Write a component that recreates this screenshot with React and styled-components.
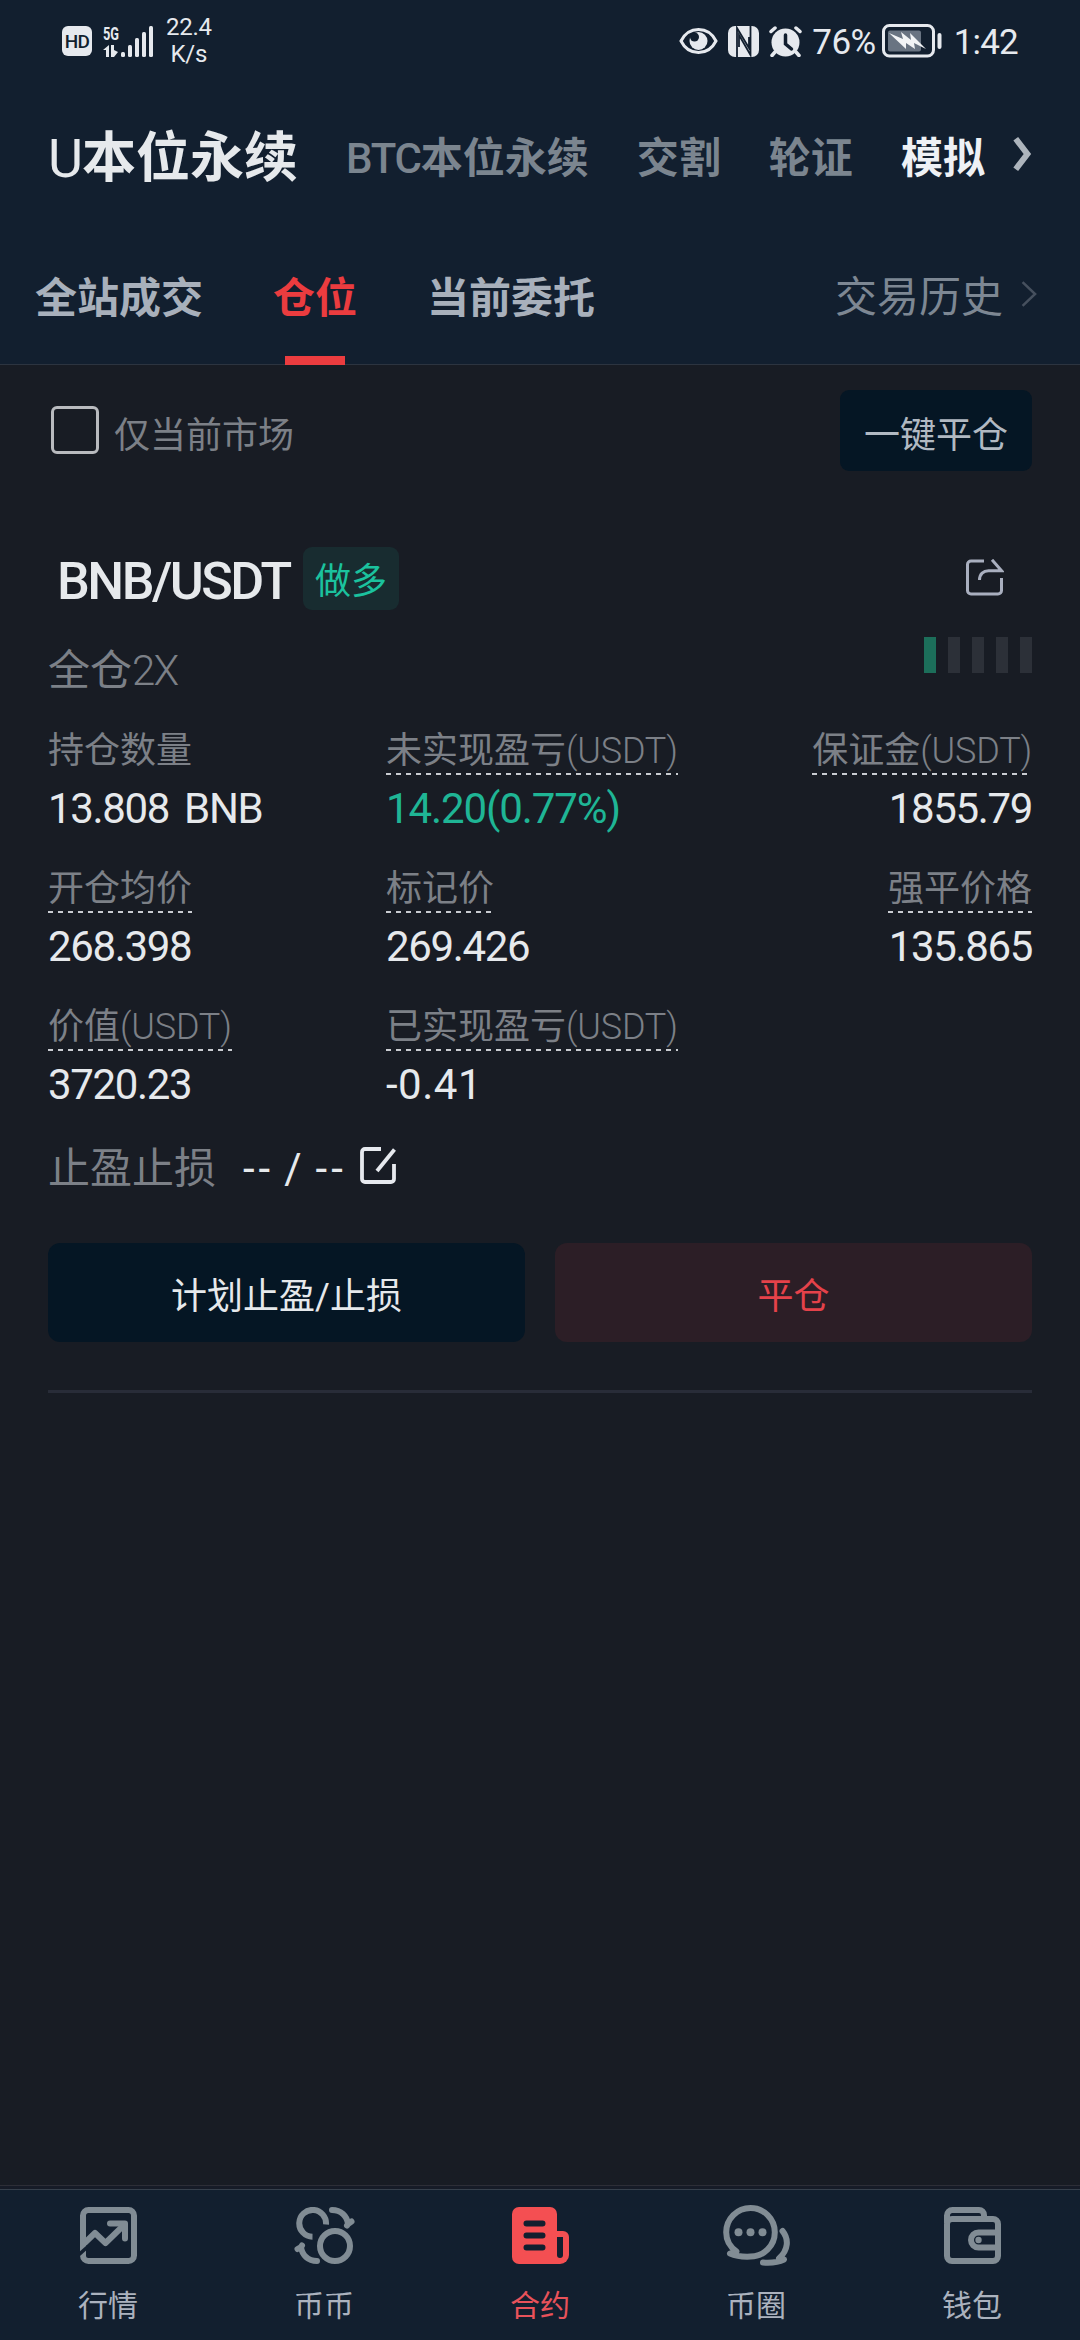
import React from "react";
import styled, { createGlobalStyle } from "styled-components";

const marketTabs = [
  { latin: "U", label: "本位永续", big: true },
  { latin: "BTC", label: "本位永续" },
  { label: "交割" },
  { label: "轮证" },
  { label: "模拟", highlight: true },
];

const subTabs = [{ label: "全站成交" }, { label: "仓位", active: true }, { label: "当前委托" }];

const stats = [
  { label: "持仓数量", value: "13.808 BNB", plain: true },
  { label: "未实现盈亏", unit: "(USDT)", value: "14.20(0.77%)", up: true },
  { label: "保证金", unit: "(USDT)", value: "1855.79", end: true },
  { label: "开仓均价", value: "268.398" },
  { label: "标记价", value: "269.426" },
  { label: "强平价格", value: "135.865", end: true },
  { label: "价值", unit: "(USDT)", value: "3720.23" },
  { label: "已实现盈亏", unit: "(USDT)", value: "-0.41", loose: true },
];

const SignalIcon = () => (
  <svg width="50" height="34" viewBox="0 0 50 34" fill="#e6e9ee" overflow="visible">
    <text x="0" y="16" fontSize="19" fontWeight="700" fontFamily="Roboto, sans-serif" textLength="16" lengthAdjust="spacingAndGlyphs">
      5G
    </text>
    <path d="M0 26l6-5v12H3v-7zM8 21h3v5l4 2-4 5H8z" />
    <rect x="18" y="28" width="4" height="5" rx="1.5" />
    <rect x="25" y="21" width="4" height="12" rx="1.5" />
    <rect x="32" y="14" width="4" height="19" rx="1.5" />
    <rect x="39" y="8" width="4" height="25" rx="1.5" />
    <rect x="46" y="2" width="4" height="31" rx="1.5" />
  </svg>
);

const EyeIcon = () => (
  <svg width="39" height="30" viewBox="0 0 39 30" fill="none">
    <path d="M2 15C6 7 12 3.5 19.5 3.5S33 7 37 15c-4 8-10 11.5-17.500 11.500S6 23 2 15z" stroke="#e6e9ee" strokeWidth="3" />
    <circle cx="19.500" cy="15" r="9" fill="#e6e9ee" />
    <circle cx="15.500" cy="11" r="4.500" fill="#121f2f" />
  </svg>
);

const NfcIcon = () => (
  <svg width="31" height="31" viewBox="0 0 31 31" fill="none">
    <rect width="31" height="31" rx="7" fill="#e6e9ee" />
    <path d="M9 31V2L21 22V11M22.500 0v29L11 9v12" stroke="#121f2f" strokeWidth="1.800" />
  </svg>
);

const AlarmIcon = () => (
  <svg width="33" height="31" viewBox="0 0 33 31" fill="none" stroke="#e6e9ee" strokeLinecap="round">
    <circle cx="16.500" cy="16.500" r="14" fill="#e6e9ee" stroke="none" />
    <path d="M2 5.500L6 2M31 5.500L27 2M6 26l-3 3.500M27 26l3 3.500" strokeWidth="3.500" />
    <path d="M16.500 9v9l6 5" stroke="#121f2f" strokeWidth="3.500" />
  </svg>
);

const BatteryIcon = () => (
  <svg width="60" height="34" viewBox="0 0 60 34" fill="none">
    <rect x="1.500" y="1.500" width="50" height="30.500" rx="6" stroke="#e6e9ee" strokeWidth="3" />
    <rect x="6" y="6.500" width="33" height="21" rx="2" fill="#697482" />
    <path d="M7 9l14 6-2-7 10 8-1-7 16 16-12-6 1 6-9-6 0 6z" fill="#f2f4f6" />
    <rect x="55.500" y="9" width="4" height="16" rx="2" fill="#e6e9ee" />
  </svg>
);

const Chevron = ({ width, height, color, stroke }) => (
  <svg width={width} height={height} viewBox={`0 0 ${width} ${height}`} fill="none">
    <path d={`M${stroke / 1.6} ${stroke / 2.2}L${width - stroke / 1.3} ${height / 2}L${stroke / 1.6} ${height - stroke / 2.2}`} stroke={color} strokeWidth={stroke} />
  </svg>
);

const ShareIcon = () => (
  <svg width="38" height="37" viewBox="0 0 38 37" fill="none" stroke="#a9afbf" strokeWidth="3">
    <path d="M18 2H5a3.500 3.500 0 0 0-3.500 3.500v26A3.500 3.500 0 0 0 5 35h27a3.500 3.500 0 0 0 3.500-3.500V19" />
    <path d="M13.500 21c0-6 4-9.300 9-9.300H35.500L26 .8" />
  </svg>
);

const EditIcon = () => (
  <svg width="37" height="37" viewBox="0 0 37 37" fill="none" stroke="#e6e9ee" strokeWidth="3.800">
    <path d="M21 2H5a3 3 0 0 0-3 3v27a3 3 0 0 0 3 3h26a3 3 0 0 0 3-3V17" />
    <path d="M17 24L34.500 2.500" />
  </svg>
);

const MarketIcon = () => (
  <svg width="57" height="57" viewBox="0 0 57 57" fill="none" stroke="#818c94" strokeWidth="6">
    <rect x="3" y="3" width="51" height="51" rx="5.500" />
    <path d="M2 38.500L15 26l10.500 10L44 18" strokeLinejoin="round" />
    <path d="M30 16.500h15v15" strokeLinecap="round" strokeLinejoin="round" />
    <path d="M-2 48.500L8 39.500" stroke="#121f2f" strokeWidth="3.500" />
  </svg>
);

const CoinsIcon = () => (
  <svg width="61" height="57" viewBox="0 0 61 57" fill="none" stroke="#818c94" strokeWidth="6">
    <path d="M32 17.500A13.400 13.400 0 1 0 18.500 29.700" />
    <circle cx="41" cy="39" r="15" />
    <path d="M38 3C47 3 53 9 54 17l3.500-2.500M54 17l-1 1.500" strokeLinecap="round" strokeLinejoin="round" />
    <path d="M23 54C14 54 8 48 7 40l-3.500 2M7 40l1-1.500" strokeLinecap="round" strokeLinejoin="round" />
  </svg>
);

const ContractIcon = () => (
  <svg width="57" height="57" viewBox="0 0 57 57" fill="none">
    <rect width="45" height="57" rx="7" fill="#f44f52" />
    <path d="M38 24h13a6 6 0 0 1 6 6v18a9 9 0 0 1-9 9H38z" fill="#f44f52" />
    <path d="M45 30h6v18a3 3 0 0 1-6 0z" fill="#121f2f" />
    <path d="M14.500 16.500h16M14.500 28.500h16M14.500 40.500h16" stroke="#121f2f" strokeWidth="6" strokeLinecap="round" />
  </svg>
);

const ChatIcon = () => (
  <svg width="67" height="61" viewBox="0 0 67 61" fill="none" stroke="#818c94" strokeWidth="6" strokeLinecap="round" strokeLinejoin="round">
    <path d="M13.500 46.500C7 42 3.200 35 3.200 27.300a24.300 24.300 0 1 1 24.300 24.300C19 52 12.500 51 7 48.500z" />
    <path d="M59.500 26C66 34 65.500 45 56 53.500l5 1C54 58 47 58 40 57.500" />
    <g fill="#818c94" stroke="none">
      <circle cx="15.500" cy="27.300" r="4" />
      <circle cx="27.500" cy="27.300" r="4" />
      <circle cx="39.500" cy="27.300" r="4" />
    </g>
  </svg>
);

const WalletIcon = () => (
  <svg width="57" height="57" viewBox="0 0 57 57" fill="none" stroke="#818c94" strokeWidth="6">
    <rect x="3" y="12" width="51" height="42" rx="5" />
    <path d="M3 16V8.500A5.500 5.500 0 0 1 8.500 3H35a5 5 0 0 1 5 5v4" />
    <path d="M54 25.500H34.500a7.500 7.500 0 0 0 0 15H54" />
    <circle cx="34.500" cy="33" r="3.200" fill="#818c94" stroke="none" />
  </svg>
);

const navItems = [
  { label: "行情", Icon: MarketIcon },
  { label: "币币", Icon: CoinsIcon },
  { label: "合约", Icon: ContractIcon, active: true },
  { label: "币圈", Icon: ChatIcon },
  { label: "钱包", Icon: WalletIcon },
];

const Stat = ({ label, unit, value, plain, up, end, loose }) => (
  <StatCell $end={end}>
    <StatLabel $plain={plain}>
      {label}
      {unit && <Unit>{unit}</Unit>}
    </StatLabel>
    <StatValue $up={up} $loose={loose}>
      {value}
    </StatValue>
  </StatCell>
);

export default function App() {
  return (
    <Screen>
      <GlobalStyle />
      <Header>
        <StatusBar>
          <HdBadge>HD</HdBadge>
          <SignalIcon />
          <Speed>
            <span>22.4</span>
            <span>K/s</span>
          </Speed>
          <StatusRight>
            <EyeIcon />
            <NfcIcon />
            <AlarmIcon />
            <Percent>76%</Percent>
            <BatteryIcon />
            <Clock>1:42</Clock>
          </StatusRight>
        </StatusBar>
        <MarketBar>
          {marketTabs.map((tab, i) => (
            <MarketTab key={i} $big={tab.big} $highlight={tab.highlight}>
              {tab.latin && <TabLatin $big={tab.big}>{tab.latin}</TabLatin>}
              {tab.label}
            </MarketTab>
          ))}
          <Chevron width={20} height={36} color="#adb4bc" stroke={6} />
        </MarketBar>
        <SubBar>
          {subTabs.map((tab) => (
            <SubTab key={tab.label} $active={tab.active}>
              {tab.label}
            </SubTab>
          ))}
          <History>
            交易历史
            <Chevron width={16} height={26} color="#46505e" stroke={2.5} />
          </History>
        </SubBar>
      </Header>

      <Content>
        <FilterRow>
          <Checkbox />
          <FilterLabel>仅当前市场</FilterLabel>
          <CloseAll>一键平仓</CloseAll>
        </FilterRow>

        <TitleRow>
          <Pair>BNB/USDT</Pair>
          <SideTag>做多</SideTag>
          <ShareIcon />
        </TitleRow>

        <LeverageRow>
          <Leverage>
            全仓<LightLatin>2X</LightLatin>
          </Leverage>
          <RiskBars>
            {[true, false, false, false, false].map((on, i) => (
              <RiskBar key={i} $on={on} />
            ))}
          </RiskBars>
        </LeverageRow>

        <StatGrid>
          {stats.map((stat) => (
            <Stat key={stat.label} {...stat} />
          ))}
        </StatGrid>

        <StopRow>
          <StopLabel>止盈止损</StopLabel>
          <StopValue>
            <span>--</span>
            <span>/</span>
            <span>--</span>
          </StopValue>
          <EditIcon />
        </StopRow>

        <Actions>
          <ActionButton>计划止盈/止损</ActionButton>
          <ActionButton $danger>平仓</ActionButton>
        </Actions>
      </Content>

      <Dock>
        <Nav>
          {navItems.map(({ label, Icon, active }) => (
            <NavItem key={label} $active={active}>
              <NavIcon>
                <Icon />
              </NavIcon>
              {label}
            </NavItem>
          ))}
        </Nav>
      </Dock>
    </Screen>
  );
}

const GlobalStyle = createGlobalStyle`
  * {
    box-sizing: border-box;
  }
  body {
    margin: 0;
    background-color: #181c24;
    font-family: Roboto, "Noto Sans CJK SC", sans-serif;
  }
  svg {
    display: block;
    flex-shrink: 0;
  }
  button {
    border: none;
    font-family: inherit;
  }
`;

const Screen = styled.div`
  display: flex;
  flex-direction: column;
  width: 1080px;
  height: 2340px;
  overflow: hidden;
  white-space: nowrap;
`;

const Header = styled.header`
  background-color: #121f2f;
`;

const StatusBar = styled.div`
  display: flex;
  align-items: center;
  height: 84px;
  padding: 0 62px 2px;
  color: #e6e9ee;
`;

const HdBadge = styled.div`
  width: 30px;
  height: 30px;
  margin-right: 11px;
  border-radius: 6px;
  background-color: #e6e9ee;
  color: #121f2f;
  font-size: 19px;
  font-weight: 500;
  line-height: 31px;
  letter-spacing: -0.8px;
  text-align: center;
`;

const Speed = styled.div`
  display: flex;
  flex-direction: column;
  align-items: center;
  margin-left: 13px;
  font-size: 24px;
  line-height: 27px;
  letter-spacing: -0.3px;
`;

const StatusRight = styled.div`
  display: flex;
  align-items: center;
  margin-left: auto;
  gap: 10px;
`;

const Percent = styled.span`
  margin: 2px -4px 0 0;
  font-size: 35px;
  letter-spacing: -0.5px;
`;

const Clock = styled.span`
  margin: 2px 0 0 2px;
  font-size: 35px;
  letter-spacing: -0.8px;
`;

const MarketBar = styled.nav`
  display: flex;
  align-items: center;
  gap: 48px;
  height: 146px;
  padding: 4px 0 0 48px;

  svg {
    margin: -11px 0 0 -21px;
  }
`;

const MarketTab = styled.div`
  font-size: ${(props) => (props.$big ? "54px" : "42px")};
  font-weight: 700;
  line-height: 64px;
  color: ${(props) => (props.$big ? "#e6e9ec" : props.$highlight ? "#eef1f5" : "#7b858f")};
`;

const TabLatin = styled.span`
  font-weight: ${(props) => (props.$big ? 400 : 500)};
  letter-spacing: ${(props) => (props.$big ? "-1px" : "-1.2px")};
`;

const SubBar = styled.div`
  display: flex;
  align-items: stretch;
  gap: 70px;
  height: 135px;
  padding: 0 43px 0 35px;
  border-bottom: 1px solid #2c3440;
  font-size: 42px;
  line-height: 137px;
`;

const SubTab = styled.div`
  position: relative;
  height: 134px;
  font-weight: 700;
  color: ${(props) => (props.$active ? "#eb3c3f" : "#a8b0bb")};

  &::after {
    content: "";
    display: ${(props) => (props.$active ? "block" : "none")};
    position: absolute;
    left: 12px;
    bottom: -1px;
    width: 60px;
    height: 9px;
    background-color: #eb3c3f;
  }
`;

const History = styled.div`
  display: flex;
  align-items: center;
  gap: 18px;
  margin-left: auto;
  color: #7d8793;

  svg {
    margin-top: -7px;
  }
`;

const Content = styled.main`
  flex: 1;
  padding: 25px 48px 0;
`;

const FilterRow = styled.div`
  display: flex;
  align-items: center;
  height: 81px;
`;

const Checkbox = styled.div`
  width: 48px;
  height: 48px;
  margin: -1px 0 0 3px;
  border: 3px solid #b9bbbf;
  border-radius: 6px;
`;

const FilterLabel = styled.span`
  padding-top: 2px;
  margin-left: 15px;
  font-size: 36px;
  color: #7c8087;
`;

const CloseAll = styled.button`
  width: 192px;
  height: 81px;
  margin-left: auto;
  padding: 2px 0 0;
  border-radius: 9px;
  background-color: #051624;
  color: #b1b9c2;
  font-size: 36px;
`;

const TitleRow = styled.div`
  display: flex;
  align-items: center;
  height: 63px;
  margin-top: 76px;
  padding: 0 28px 0 9px;

  svg {
    margin: -3px 0 0 auto;
  }
`;

const Pair = styled.h1`
  width: 246px;
  margin: 6px 0 0;
  font-size: 52px;
  font-weight: 500;
  letter-spacing: -2.5px;
  color: #e6e9ec;
`;

const SideTag = styled.span`
  height: 63px;
  padding: 0 12px;
  border-radius: 9px;
  background-color: #182c30;
  color: #1bc29e;
  font-size: 36px;
  line-height: 71px;
`;

const LeverageRow = styled.div`
  display: flex;
  justify-content: space-between;
  align-items: flex-start;
  margin-top: 27px;
`;

const Leverage = styled.div`
  font-size: 42px;
  line-height: 68px;
  color: #7c8087;
`;

const LightLatin = styled.span`
  font-weight: 300;
  letter-spacing: -1.8px;
`;

const RiskBars = styled.div`
  display: flex;
  gap: 12px;
`;

const RiskBar = styled.div`
  width: 12px;
  height: 36px;
  background-color: ${(props) => (props.$on ? "#1c6e5a" : "#2c3038")};
`;

const StatGrid = styled.div`
  display: grid;
  grid-template-columns: 338px 1fr auto;
  grid-auto-rows: 138px;
  margin-top: 23px;
`;

const StatCell = styled.div`
  display: flex;
  flex-direction: column;
  align-items: ${(props) => (props.$end ? "flex-end" : "flex-start")};
`;

const StatLabel = styled.div`
  height: 47px;
  font-size: 36px;
  line-height: 46px;
  color: #7c8087;
  background: ${(props) =>
    props.$plain
      ? "none"
      : "repeating-linear-gradient(90deg, #c9ccd1 0 5px, transparent 5px 10px) left bottom / 100% 2px no-repeat"};
`;

const Unit = styled(LightLatin)`
  letter-spacing: -0.2px;
`;

const StatValue = styled.div`
  margin-top: 9px;
  font-size: 42px;
  line-height: 50px;
  letter-spacing: ${(props) => (props.$loose ? "0.5px" : props.$up ? "-1.1px" : "-1.35px")};
  word-spacing: 6px;
  color: ${(props) => (props.$up ? "#1fb595" : "#e6e9ec")};
`;

const StopRow = styled.div`
  display: flex;
  align-items: center;
  height: 54px;
  font-size: 42px;
  line-height: 54px;

  svg {
    margin: -8px 0 0 13px;
  }
`;

const StopLabel = styled.span`
  color: #7c8087;
`;

const StopValue = styled.span`
  display: flex;
  gap: 10px;
  margin-left: 27px;
  letter-spacing: 4px;
  color: #e6e9ec;
`;

const Actions = styled.div`
  display: flex;
  gap: 30px;
  margin-top: 47px;
  padding-bottom: 48px;
  border-bottom: 3px solid #282c38;
`;

const ActionButton = styled.button`
  flex: 1;
  height: 99px;
  padding: 1px 0 0;
  border-radius: 12px;
  background-color: ${(props) => (props.$danger ? "#2c1e26" : "#051624")};
  color: ${(props) => (props.$danger ? "#e5424a" : "#e6e9ec")};
  font-size: 36px;
`;

const Dock = styled.footer`
  padding-top: 3px;
  border-top: 1px solid #2d2e37;
  background-color: #161b27;
`;

const Nav = styled.nav`
  display: flex;
  height: 151px;
  border-top: 1px solid #36404c;
  background-color: #121f2f;
`;

const NavItem = styled.div`
  flex: 1;
  display: flex;
  flex-direction: column;
  align-items: center;
  padding-top: 15px;
  font-size: 30px;
  line-height: 40px;
  color: ${(props) => (props.$active ? "#e8525a" : "#abb2be")};
`;

const NavIcon = styled.div`
  display: flex;
  align-items: center;
  height: 61px;
  margin-bottom: 20px;
`;
